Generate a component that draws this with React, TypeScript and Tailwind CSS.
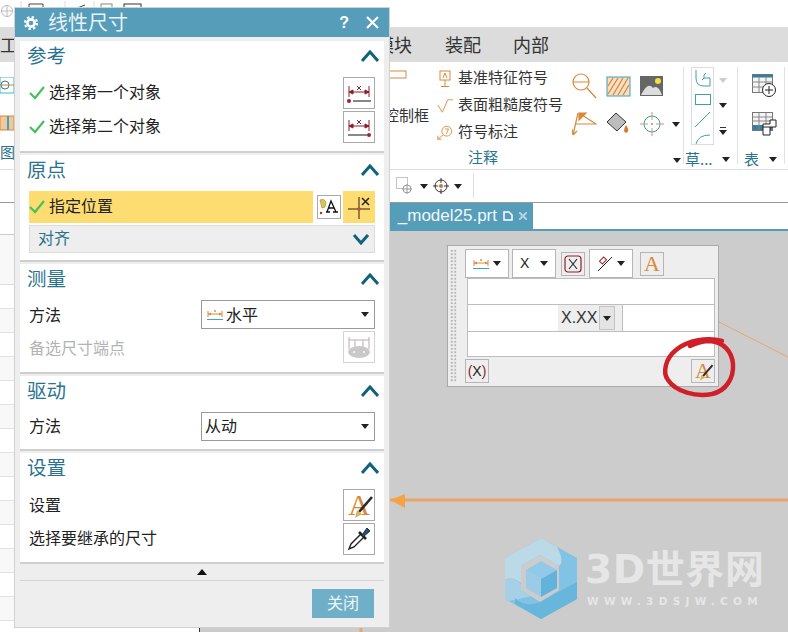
import type { ReactNode } from "react";

const font = { fontFamily: '"Noto Sans CJK SC", "Liberation Sans", sans-serif' };
const latin = { fontFamily: '"Liberation Sans", sans-serif' };

function Chevron({ down = false }: { down?: boolean }) {
  return (
    <svg width="18" height="12" viewBox="0 0 18 12" fill="none" stroke="#11627c" strokeWidth="3">
      <path d={down ? "M2 2 L9 10 L16 2" : "M1 11 L9 2 L17 11"} />
    </svg>
  );
}

function Check() {
  return (
    <svg width="16" height="14" viewBox="0 0 16 14" fill="none" stroke="#45c25a" strokeWidth="2.2" className="shrink-0">
      <path d="M1 7 L6 12 L15 1" />
    </svg>
  );
}

function Caret({ color = "#222" }: { color?: string }) {
  return (
    <svg width="8" height="5" viewBox="0 0 8 5" className="shrink-0">
      <path d="M0 0 H8 L4 5 Z" fill={color} />
    </svg>
  );
}

function DimIcon({ flip = false }: { flip?: boolean }) {
  return (
    <svg width="24" height="24" viewBox="0 -4 24 24" fill="none" stroke="#8c1f2b" strokeWidth="1">
      <path d="M2 1 V12 M22 1 V12 M2 7 H22" />
      <path d="M2 7 L6 5 V9 Z M22 7 L18 5 V9 Z" fill="#8c1f2b" />
      <path d="M10 1 L14 5 M14 1 L10 5" strokeWidth="1" />
      <path d={flip ? "M1 16 H20" : "M6 16 H24"} stroke="#111" />
      <circle cx={flip ? 22 : 2} cy="16" r="2" fill="#a3202c" stroke="none" />
    </svg>
  );
}

function HorizDim({ w = 16 }: { w?: number }) {
  return (
    <svg width={w} height="12" viewBox="0 0 16 12" fill="none" className="shrink-0">
      <path d="M1 2 V8 M15 2 V8 M1 5 H15" stroke="#d98a3d" strokeWidth="1" />
      <path d="M1 5 L4 3.5 V6.5 Z M15 5 L12 3.5 V6.5 Z" fill="#d98a3d" />
      <path d="M0 10.5 H16" stroke="#3aa6c0" strokeWidth="1" />
      <path d="M7 1 L9 3 M9 1 L7 3" stroke="#d98a3d" strokeWidth="0.7" />
    </svg>
  );
}

function BigA({ small = false, brush = false }: { small?: boolean; brush?: boolean }) {
  return (
    <span
      className={`relative flex h-full w-full items-center justify-center leading-none text-[#d9883a] ${small ? "text-[22px]" : "text-[30px]"}`}
      style={{ fontFamily: '"Liberation Serif", serif' }}
    >
      A
      {brush && (
        <svg viewBox="0 0 30 30" fill="none" className="absolute inset-0 h-full w-full">
          <path d="M15 22 L28 7" stroke="#2a2a2a" strokeWidth="2.6" />
          <path d="M11 28 L13 20 L18 24 Z" fill="#d4b65a" />
        </svg>
      )}
    </span>
  );
}

function Dropper() {
  return (
    <svg width="26" height="26" viewBox="0 0 26 26" fill="none">
      <path d="M3 23 L5 18 L15 8 L18 11 L8 21 Z" fill="#fff" stroke="#222" strokeWidth="1.4" />
      <path d="M13 6 L20 13" stroke="#222" strokeWidth="2.5" />
      <path d="M16 9 L21 2 L24 5 L17 11 Z" fill="#28506e" stroke="#1b2f44" strokeWidth="1" />
    </svg>
  );
}

function IconBtn({ children }: { children: ReactNode }) {
  return (
    <div className="flex h-[32px] w-[32px] shrink-0 items-center justify-center border border-[#a9a9a9] bg-white">
      {children}
    </div>
  );
}

function Section({ title, h, children }: { title: string; h: string; children: ReactNode }) {
  return (
    <section className={`${h} flex flex-col border-b-2 border-[#cfcfcf] bg-white`}>
      <div className="flex h-[36px] shrink-0 items-start justify-between pl-[7px] pr-[5px]">
        <span className="mt-[1px] text-[19.5px] leading-[26px] text-[#2a7390]">{title}</span>
        <span className="mt-[9px]">
          <Chevron />
        </span>
      </div>
      <div className="flex flex-col gap-[2px] px-[9px]">{children}</div>
    </section>
  );
}

function Select({ children }: { children: ReactNode }) {
  return (
    <div className="flex h-[29px] w-[174px] items-center justify-between border border-[#999] bg-white pl-[3px] pr-[5px] text-[16px] text-[#222]">
      <span className="flex items-center gap-[3px]">{children}</span>
      <Caret />
    </div>
  );
}

function LinearDimensionDialog() {
  return (
    <div className="absolute left-[14px] top-[7px] flex h-[621px] w-[376px] flex-col border border-[#d2d2d2] bg-[#eeeeee]">
      <div className="flex h-[29px] shrink-0 items-center bg-[#559db9] pl-[8px] pr-[10px] text-white">
        <svg width="16" height="16" viewBox="0 0 16 16" fill="none" stroke="#fff" className="shrink-0">
          <circle cx="8" cy="8" r="3.6" strokeWidth="2.6" />
          <circle cx="8" cy="8" r="6" strokeWidth="2.2" strokeDasharray="2.4 2.3" />
        </svg>
        <span className="ml-[9px] pb-[2px] text-[20px] leading-none text-[#e9f2f6]">线性尺寸</span>
        <span className="ml-auto text-[16px] font-bold" style={latin}>?</span>
        <svg width="13" height="13" viewBox="0 0 13 13" stroke="#fff" strokeWidth="2.2" className="ml-[17px]">
          <path d="M1 1 L12 12 M12 1 L1 12" />
        </svg>
      </div>

      <div className="mt-[4px] flex flex-col gap-[2px] px-[5px]">
        <Section title="参考" h="h-[112px]">
          <div className="flex items-center gap-[4px] text-[16px] text-[#222]">
            <Check />
            <span className="pb-[4px]">选择第一个对象</span>
            <span className="ml-auto"><IconBtn><DimIcon /></IconBtn></span>
          </div>
          <div className="flex items-center gap-[4px] text-[16px] text-[#222]">
            <Check />
            <span className="pb-[4px]">选择第二个对象</span>
            <span className="ml-auto"><IconBtn><DimIcon flip /></IconBtn></span>
          </div>
        </Section>

        <Section title="原点" h="h-[107px]">
          <div className="flex items-center">
            <div className="flex h-[32px] w-[284px] items-center gap-[4px] bg-[#fddc72] text-[16px] text-[#222]">
              <Check />
              <span className="pb-[4px]">指定位置</span>
            </div>
            <div className="ml-[4px] flex h-[24px] w-[24px] items-center justify-center border border-[#a9a9a9] bg-white">
              <svg width="20" height="18" viewBox="0 0 20 18">
                <path d="M1 2 Q5 0 7 4 L6 9 L3 10 Z" fill="#d9c65a" stroke="#a0913a" strokeWidth="0.7" />
                <circle cx="2" cy="15" r="1.2" fill="#c0202c" />
                <path d="M7 14 H11 M14 14 H19 M8 14 L12 3 L17 14 M9.5 10 H15.5" fill="none" stroke="#111" strokeWidth="1.3" />
              </svg>
            </div>
            <div className="ml-[2px] flex h-[32px] w-[32px] items-center justify-center bg-[#fddc72]">
              <svg width="24" height="24" viewBox="0 0 24 24" fill="none" stroke="#222" strokeWidth="1">
                <path d="M1 14 H23 M12 2 V24" />
                <circle cx="12" cy="14" r="1.8" fill="#c0502c" stroke="none" />
                <path d="M15 3 L22 10 M22 3 L15 10" strokeWidth="1.5" />
              </svg>
            </div>
          </div>
          <div className="flex h-[28px] items-center justify-between border border-[#dcdcdc] bg-[#eeeeee] pl-[8px] pr-[4px] text-[16px] text-[#2a7390]">
            <span className="pb-[4px]">对齐</span>
            <Chevron down />
          </div>
        </Section>

        <Section title="测量" h="h-[110px]">
          <div className="flex h-[29px] items-center justify-between text-[16px] text-[#222]">
            <span className="pb-[2px]">方法</span>
            <Select>
              <span className="ml-[2px]"><HorizDim /></span>
              <span className="pb-[2px]">水平</span>
            </Select>
          </div>
          <div className="flex items-center justify-between text-[16px] text-[#b3b3b3]">
            <span className="pb-[1px]">备选尺寸端点</span>
            <div className="flex h-[32px] w-[32px] items-center justify-center border border-[#d4d4d4] bg-white">
              <svg width="24" height="24" viewBox="0 0 24 24" fill="none" stroke="#c4a9ad" strokeWidth="1">
                <path d="M2 2 V14 M22 2 V14 M2 5 H22 M8 5 V12 M16 5 V12" />
                <ellipse cx="12" cy="17" rx="11" ry="6" fill="#c9c9c9" stroke="none" />
                <rect x="6" y="16" width="2" height="2" fill="#eee" stroke="none" />
                <rect x="16" y="16" width="2" height="2" fill="#eee" stroke="none" />
              </svg>
            </div>
          </div>
        </Section>

        <Section title="驱动" h="h-[75px]">
          <div className="flex h-[29px] items-center justify-between text-[16px] text-[#222]">
            <span className="pb-[3px]">方法</span>
            <Select><span className="pb-[3px]">从动</span></Select>
          </div>
        </Section>

        <Section title="设置" h="h-[111px]">
          <div className="flex items-center justify-between text-[16px] text-[#222]">
            <span className="pb-[3px]">设置</span>
            <IconBtn><BigA brush /></IconBtn>
          </div>
          <div className="flex items-center justify-between text-[16px] text-[#222]">
            <span className="pb-[4px]">选择要继承的尺寸</span>
            <IconBtn><Dropper /></IconBtn>
          </div>
        </Section>
      </div>

      <div className="mx-[5px] flex h-[17px] shrink-0 items-center justify-center border-b border-[#d4d4d4]">
        <svg width="10" height="6" viewBox="0 0 10 6">
          <path d="M0 6 H10 L5 0 Z" fill="#111" />
        </svg>
      </div>
      <div className="flex justify-end pr-[15px] pt-[8px]">
        <button className="h-[29px] w-[62px] bg-[#6fb0c8] pb-[3px] text-[16px] text-[#eef6f9]">关闭</button>
      </div>
    </div>
  );
}

function FloatingEditor() {
  const box = "flex h-[29px] w-[44px] items-center justify-between border border-[#b5b5b5] bg-white px-[7px]";
  const tool = "flex h-[24px] w-[24px] items-center justify-center border border-[#b5b5b5] bg-[#eeeeee]";
  return (
    <div className="absolute left-[447px] top-[245px] flex h-[142px] w-[272px] border border-[#aaaaaa] bg-[#eeeeee]">
      <div className="ml-[2px] mt-[3px] h-[134px] w-[7px] shrink-0 bg-[radial-gradient(#b4b4b4_1.2px,transparent_1.4px)] bg-[length:3.5px_3.5px]" />
      <div className="ml-[8px] flex w-[250px] flex-col pt-[3px]">
        <div className="flex h-[29px] items-center">
          <div className={box}>
            <HorizDim />
            <Caret />
          </div>
          <div className={`${box} ml-[3px]`}>
            <span className="text-[14px] text-[#222]" style={latin}>X</span>
            <Caret />
          </div>
          <div className={`${tool} ml-[5px]`}>
            <svg width="18" height="18" viewBox="0 0 18 18" fill="none">
              <rect x="1" y="1" width="16" height="16" rx="3" stroke="#8c1f2b" strokeWidth="1.2" />
              <path d="M5 4 L13 14 M13 4 L5 14" stroke="#222" strokeWidth="1.1" />
            </svg>
          </div>
          <div className={`${box} ml-[4px]`}>
            <svg width="16" height="16" viewBox="0 0 16 16" fill="none">
              <path d="M1 15 L15 1" stroke="#222" strokeWidth="1" />
              <rect x="3" y="2.5" width="6" height="4" transform="rotate(-45 6 4.5)" stroke="#a3202c" strokeWidth="1" />
            </svg>
            <Caret />
          </div>
          <div className={`${tool} ml-[7px]`}>
            <BigA small />
          </div>
        </div>
        <div className="ml-[2px] flex flex-col">
          <div className="h-[27px] border border-[#bdbdbd] bg-white" />
          <div className="flex h-[26px] border-x border-[#bdbdbd] bg-white">
            <div className="w-[90px]" />
            <div className="flex w-[65px] items-center border-r border-[#bdbdbd] bg-[#eeeeee] pl-[3px]">
              <span className="text-[16px] text-[#333]" style={latin}>X.XX</span>
              <span className="ml-[2px] flex h-[24px] w-[16px] items-center justify-center border border-[#c4c4c4] bg-[#e4e4e4]">
                <Caret />
              </span>
            </div>
          </div>
          <div className="h-[26px] border border-[#bdbdbd] bg-white" />
        </div>
        <div className="mt-[2px] flex items-center justify-between">
          <div className={tool}>
            <span className="text-[14px] text-[#222]" style={latin}>
              <span className="text-[#8c1f2b]">(</span>X<span className="text-[#8c1f2b]">)</span>
            </span>
          </div>
          <div className={tool}>
            <BigA small brush />
          </div>
        </div>
      </div>
    </div>
  );
}

function Watermark() {
  return (
    <div className="absolute left-[505px] top-[538px] flex items-start">
      <svg width="73" height="81" viewBox="0 0 73 81">
        <path d="M36 0 L72 20 V61 L36 81 L0 61 V20 Z" fill="#82c2e4" />
        <path d="M36 0 L52 9 Q60 24 54 28 L35 17 L16 28 V45 Q6 38 0 42 V20 Z" fill="#bcd9e8" />
        <path d="M0 42 Q8 38 16 46 V52 L26 58 Q12 62 3 63 L0 61 Z" fill="#a6d0e6" />
        <path d="M10 60 Q20 70 35 64 L72 44 V61 L36 81 L10 66 Z" fill="#68b6dc" />
        <path d="M35 17 L54 28 V52 L35 64 L16 52 V28 Z" fill="#cccccc" />
        <path d="M36 23 L52 32 L36 41 L21 32 Z" fill="#93c9e8" />
        <path d="M21 32 L36 41 V59 L21 50 Z" fill="#9ccbe8" />
        <path d="M52 32 V50 L36 59 V41 Z" fill="#62b2dc" />
      </svg>
      <div className="ml-[7px] mt-[10px] flex flex-col text-[#e6e6e6]">
        <span className="whitespace-nowrap text-[39px] font-bold leading-[44px] tracking-[0.6px]" style={{ fontFamily: '"DejaVu Sans", "Noto Sans CJK SC", sans-serif' }}>
          3D世界网
        </span>
        <span className="ml-[2px] mt-[3px] whitespace-nowrap text-[10.5px] font-bold leading-[12px] tracking-[5.3px]" style={{ fontFamily: '"DejaVu Sans", sans-serif' }}>
          WWW.3DSJW.COM
        </span>
      </div>
    </div>
  );
}

function TextTool({ icon, label }: { icon: ReactNode; label: string }) {
  return (
    <div className="flex h-[27px] items-center gap-[5px] text-[15px] text-[#333]">
      <span className="flex w-[16px] justify-center">{icon}</span>
      <span className="pb-[2px]">{label}</span>
    </div>
  );
}

function Ribbon() {
  return (
    <div className="flex h-[108px] shrink-0 border-b border-[#dddddd] bg-white">
      <div className="flex w-[14px] shrink-0 flex-col overflow-hidden pt-[15px]">
        <svg width="14" height="55" viewBox="0 0 14 55" fill="none">
          <rect x="0" y="0" width="14" height="16" stroke="#45b4d0" />
          <circle cx="5" cy="8" r="4" stroke="#2f7f96" />
          <path d="M0 8 H14" stroke="#c9863e" />
          <path d="M0 39 H14 V53 H0 Z" fill="#f0c89c" stroke="#d9883a" />
          <path d="M8 39 V53" stroke="#3aa6c0" strokeWidth="2" />
        </svg>
        <span className="mt-[10px] text-[15px] leading-[20px] text-[#2a7390]">图</span>
      </div>
      <div className="ml-[370px] flex w-[53px] shrink-0 flex-col overflow-hidden">
        <svg width="20" height="10" viewBox="0 0 20 10" fill="none" className="ml-[6px] mt-[8px]">
          <rect x="-2" y="1" width="18" height="7" stroke="#d9883a" />
        </svg>
        <span className="mt-[24px] whitespace-nowrap text-[15px] text-[#333]">控制框</span>
      </div>
      <div className="w-[134px] shrink-0 pt-[3px]">
        <TextTool
          label="基准特征符号"
          icon={
            <svg width="14" height="18" viewBox="0 0 14 18" fill="none" stroke="#d9883a">
              <rect x="2" y="1" width="10" height="9" />
              <path d="M7 10 V16 M3 16.5 H11 M5 8 L7 3 L9 8" />
            </svg>
          }
        />
        <TextTool
          label="表面粗糙度符号"
          icon={
            <svg width="18" height="16" viewBox="0 0 18 16" fill="none" stroke="#d9883a">
              <path d="M1 7 L6 15 L12 1 H18" />
            </svg>
          }
        />
        <TextTool
          label="符号标注"
          icon={
            <svg width="18" height="16" viewBox="0 0 18 16" fill="none" stroke="#d9883a">
              <circle cx="11" cy="6" r="5.5" />
              <path d="M7 10 L1 15 M1 11 V15 H5 M9 3.5 H13 L10.5 9" />
            </svg>
          }
        />
        <div className="mt-[1px] pl-[31px] text-[15px] leading-[20px] text-[#2a7390]">注释</div>
      </div>
      <div className="w-[112px] shrink-0">
        <div className="ml-[1px] mt-[9px] flex h-[30px] items-center gap-[9px]">
          <svg width="25" height="26" viewBox="0 0 25 26" fill="none" stroke="#d9883a" strokeWidth="1.2">
            <circle cx="9" cy="9" r="8" />
            <path d="M1 9 H17 M15 15 L24 25" />
          </svg>
          <svg width="25" height="21" viewBox="0 0 25 21" fill="none">
            <rect x="1" y="1" width="23" height="19" fill="#f7dfc6" stroke="#3aa0b4" />
            <path d="M2 10 L7 2 M2 18 L12 2 M7 19 L17 2 M12 19 L22 2 M17 19 L23 9" stroke="#d9883a" strokeWidth="1.3" />
          </svg>
          <svg width="23" height="20" viewBox="0 0 23 20">
            <rect width="23" height="20" fill="#666" />
            <circle cx="18" cy="5" r="3" fill="#f0e040" />
            <path d="M1 19 Q8 5 13 12 Q18 8 22 19 Z" fill="#ddd" />
          </svg>
        </div>
        <div className="ml-[1px] mt-[8px] flex h-[30px] items-center gap-[9px]">
          <svg width="25" height="26" viewBox="0 0 25 26" fill="none" stroke="#d9883a" strokeWidth="1.2">
            <path d="M7 2 L24 13 H4 M6 2 L1 24 M1 24 L0 18 M1 24 L5 20" />
            <path d="M7 2 H14 L7 9 Z" fill="#d9883a" />
          </svg>
          <svg width="25" height="24" viewBox="0 0 25 24">
            <path d="M10 1 L20 10 L11 19 L1 10 Z" fill="#bdbdbd" stroke="#333" />
            <path d="M20 13 Q24 18 20.5 21 Q16 20 20 13 Z" fill="#d9782a" />
          </svg>
          <svg width="24" height="24" viewBox="0 0 24 24" fill="none" stroke="#3aa0b4">
            <circle cx="12" cy="12" r="8" />
            <path d="M0 12 H8 M16 12 H24 M12 0 V8 M12 16 V24" stroke="#c9a05a" />
            <circle cx="12" cy="12" r="1" fill="#d9883a" stroke="none" />
          </svg>
          <span className="-ml-[1px]"><Caret /></span>
        </div>
        <div className="mt-[19px] flex justify-end pr-[2px]"><Caret /></div>
      </div>
      <div className="my-[5px] w-px shrink-0 bg-[#e2e2e2]" />
      <div className="flex w-[53px] shrink-0 flex-col pl-[1px]">
        <div className="flex">
          <div className="ml-[6px] mt-[5px] flex h-[78px] w-[23px] flex-col items-center gap-[6px] overflow-hidden border border-[#dcdcdc]">
            <svg width="16" height="19" viewBox="0 0 16 19" fill="none" stroke="#3aa0b4" className="mt-[1px]">
              <path d="M1 1 V9 Q1 17 9 17 H15 V9 H9 M9 9 L7 11 M9 9 L9 6 L11 4" />
            </svg>
            <svg width="16" height="11" viewBox="0 0 16 11" fill="none" stroke="#3aa0b4"><rect x="0.5" y="0.5" width="15" height="10" /></svg>
            <svg width="17" height="17" viewBox="0 0 17 17" fill="none" stroke="#3aa0b4"><path d="M1 16 L16 1" /></svg>
            <svg width="16" height="10" viewBox="0 0 16 10" fill="none" stroke="#3aa0b4"><path d="M1 10 Q3 1 15 1" /></svg>
          </div>
          <div className="ml-[5px] flex w-[8px] flex-col items-center pt-[16px]">
            <Caret color="#cccccc" />
            <div className="mt-[20px]"><Caret /></div>
            <div className="mt-[19px] h-px w-[6px] bg-[#333]" />
            <div className="mt-[2px]"><Caret /></div>
          </div>
        </div>
        <div className="mt-[4px] flex items-center text-[15px] leading-[20px] text-[#2a7390]">
          <span className="w-[35px] whitespace-nowrap">草...</span>
          <span className="ml-[2px]"><Caret /></span>
        </div>
      </div>
      <div className="my-[5px] w-px shrink-0 bg-[#e2e2e2]" />
      <div className="flex w-[46px] shrink-0 flex-col pl-[14px]">
        <svg width="25" height="24" viewBox="0 0 25 24" fill="none" className="mt-[12px]">
          <rect x="0.5" y="0.5" width="20" height="18" fill="#f4f4f4" stroke="#777" />
          <rect x="0.5" y="0.5" width="20" height="3" fill="#3a7f98" />
          <path d="M0 8 H20 M0 13 H20 M7 3 V18 M14 3 V18" stroke="#888" />
          <circle cx="17" cy="16" r="6.5" fill="#fff" stroke="#222" />
          <path d="M13 16 H21 M17 12 V20" stroke="#222" />
        </svg>
        <svg width="25" height="24" viewBox="0 0 25 24" fill="none" className="mt-[14px]">
          <rect x="0.5" y="0.5" width="20" height="18" fill="#f4f4f4" stroke="#777" />
          <rect x="0.5" y="13" width="20" height="5" fill="#3a7f98" />
          <path d="M0 5 H20 M0 9 H20 M7 1 V18 M14 1 V18" stroke="#888" />
          <path d="M11 12 H18 V8 H24 V15 H18 V23 H11 Z M18 15 H11" fill="#fff" stroke="#222" />
        </svg>
        <div className="-ml-[8px] mt-[13px] flex items-center text-[15px] leading-[20px] text-[#2a7390]">
          <span className="w-[25px]">表</span>
          <Caret />
        </div>
      </div>
      <div className="my-[5px] w-px shrink-0 bg-[#e2e2e2]" />
    </div>
  );
}

function Sidebar() {
  const rows = Array.from({ length: 14 });
  return (
    <div className="flex w-[200px] shrink-0 flex-col border-r border-[#333] bg-white">
      <div className="h-[32px] shrink-0 border-b border-[#cccccc]" />
      <div className="h-[50px] shrink-0 border-b border-[#dddddd] bg-[#f8f8f8]" />
      {rows.map((_, i) => (
        <div
          key={i}
          className={`h-[24px] shrink-0 border-b border-[#e2e2e2] ${i % 2 === 0 ? "bg-white" : "bg-[#f8f8f8]"}`}
        />
      ))}
    </div>
  );
}

export default function App() {
  return (
    <div className="relative flex h-[632px] w-[788px] flex-col overflow-hidden bg-white" style={font}>
      {/* quick access bar, mostly hidden by the dialog */}
      <div className="flex h-[27px] shrink-0 items-start">
        <svg width="180" height="18" viewBox="0 0 180 18" fill="none" className="ml-[1px] mt-[1px]">
          <circle cx="6" cy="10" r="5.5" stroke="#bbbbbb" />
          <path d="M0 10 H12 M6 4 V16" stroke="#bbbbbb" />
          <path d="M20 0 V6 M64 0 V6 M93 0 V6" stroke="#dddddd" />
          <path d="M28 3 H42 M28 3 V7 M42 3 V7" stroke="#444" />
          <path d="M76 7 L84 4" stroke="#444" />
          <rect x="100" y="3" width="11" height="6" stroke="#888" />
          <rect x="123" y="3" width="17" height="6" stroke="#333" />
        </svg>
      </div>

      <div className="flex h-[35px] shrink-0 items-center bg-[#dcdcdc] text-[18px] text-[#333]">
        <span className="w-[376px] overflow-hidden">工</span>
        <span className="w-[69px] whitespace-nowrap">模块</span>
        <span className="w-[68px]">装配</span>
        <span>内部</span>
      </div>

      <Ribbon />

      <div className="flex h-[33px] shrink-0 items-center border-b border-[#999] pl-[396px]">
        <svg width="17" height="18" viewBox="0 0 17 18" fill="none">
          <rect x="0.5" y="0.5" width="11" height="11" stroke="#c4c4c4" />
          <circle cx="11" cy="12" r="4" fill="#fff" stroke="#999" />
          <path d="M6 12 H16 M11 7 V17" stroke="#999" />
        </svg>
        <span className="ml-[7px]"><Caret /></span>
        <svg width="16" height="16" viewBox="0 0 16 16" fill="none" stroke="#333" className="ml-[5px]">
          <circle cx="8" cy="8" r="6" />
          <path d="M0 8 H5 M11 8 H16 M8 0 V5 M8 11 V16" />
          <circle cx="8" cy="8" r="2" fill="#c9783a" stroke="none" />
        </svg>
        <span className="ml-[5px]"><Caret /></span>
        <div className="ml-[11px] h-[24px] w-px bg-[#dddddd]" />
      </div>

      <div className="flex min-h-0 flex-1">
        <Sidebar />
        <div className="flex flex-1 flex-col">
          <div className="flex h-[26px] shrink-0 bg-white">
            <div className="flex w-[333px] items-center justify-end bg-[#559db9] pr-[6px] text-[#f2f7fa]">
              <span className="text-[17px]" style={latin}>_model25.prt</span>
              <svg width="10" height="10" viewBox="0 0 10 10" fill="none" stroke="#fff" strokeWidth="1.5" className="ml-[6px]">
                <path d="M1 1 H6 L9 4 V9 H1 Z" />
              </svg>
              <svg width="8" height="8" viewBox="0 0 8 8" stroke="#b5d3e0" strokeWidth="2" className="ml-[6px]">
                <path d="M0 0 L8 8 M8 0 L0 8" />
              </svg>
            </div>
          </div>
          <div className="h-[2px] shrink-0 bg-[#559db9]" />
          <div className="flex-1 bg-[#cccccc]" />
        </div>
      </div>

      {/* model lines on the canvas */}
      <svg width="788" height="632" viewBox="0 0 788 632" className="pointer-events-none absolute left-0 top-0" fill="none">
        <path d="M719 322 L788 357" stroke="#eaa56c" strokeWidth="1" />
        <path d="M390 500 H788" stroke="#e9a468" strokeWidth="3" />
        <path d="M390 500 L405 494 V508 Z" fill="#f5a247" />
        <path d="M361 628 V632" stroke="#eaa56c" strokeWidth="3" />
      </svg>

      <Watermark />
      <FloatingEditor />
      <LinearDimensionDialog />

      {/* red hand-drawn circle */}
      <svg width="80" height="70" viewBox="0 0 80 70" fill="none" className="pointer-events-none absolute left-[660px] top-[334px]">
        <path
          d="M62 7 C48 3 28 6 16 16 C6 24 2 38 8 46 C16 58 36 63 52 60 C66 57 74 44 73 30 C72 18 64 8 50 7 C44 7 36 9 30 12"
          stroke="#cf1f28"
          strokeWidth="4.5"
          strokeLinecap="round"
        />
      </svg>
    </div>
  );
}
